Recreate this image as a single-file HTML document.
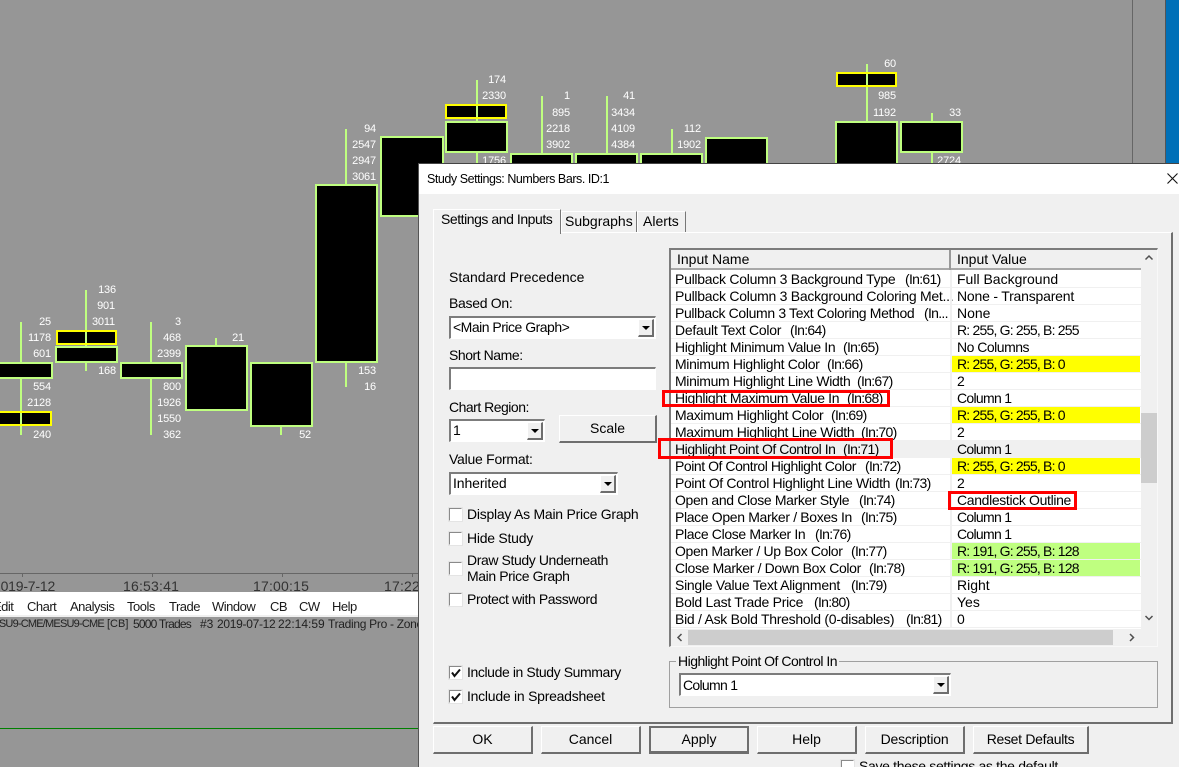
<!DOCTYPE html>
<html><head><meta charset="utf-8"><style>
html,body{margin:0;padding:0;background:#969696}
#p{position:relative;width:1179px;height:767px;overflow:hidden;background:#969696;font-family:"Liberation Sans",sans-serif}
#p div,#p span{position:absolute;box-sizing:border-box;white-space:nowrap}
.c{background:#000;border:2px solid #bfff80}
.y{background:#000;border:2px solid #ff0;height:15px}
.w{background:#bfff80;width:2px}
.n{color:#fff;font-size:11px;line-height:14px;height:14px;text-align:right;width:40px;letter-spacing:-.15px}
.t{font-size:14px;line-height:16px;height:16px;color:#000}
.r{left:671px;width:470px;height:17px;border-bottom:1px solid #f0f0f0;font-size:14px;line-height:16px;color:#000}
.r span{top:0}
.r .a{left:4px;letter-spacing:-.35px}
.r .a.x{letter-spacing:-.45px}
.r .a.z{letter-spacing:-.27px}
.r .i{letter-spacing:-.7px}
.r .v{left:286px}
.r .q{left:286px;letter-spacing:-.8px}
.r .o{left:286px;letter-spacing:-.7px}
.r .b{left:281px;width:188px;height:16px}
.bt{background:#f0f0f0;border:1px solid #fff;border-right:2px solid #6e6e6e;border-bottom:2px solid #6e6e6e;font-size:14px;line-height:24px;text-align:center;color:#000}
.cb{background:#fff;border:2px solid #7c7c7c;border-right:1px solid #fff;border-bottom:1px solid #fff;font-size:14px;line-height:19px;padding-left:2px;color:#000}
.ar{right:1px;top:1px;bottom:1px;width:16px;background:#f0f0f0;border:1px solid #fff;border-right:2px solid #6e6e6e;border-bottom:2px solid #6e6e6e}
.ar:after{content:"";position:absolute;left:3px;top:6px;border:4px solid transparent;border-top:4px solid #000;border-bottom:0}
.k{width:13px;height:13px;background:#fff;border:1px solid #8a8a8a;border-right-color:#fff;border-bottom-color:#fff;outline:1px solid #e4e4e4}
.red{border:3px solid #f00}
.m{font-size:13px;letter-spacing:-.5px;line-height:16px;height:16px;color:#1a1a1a;top:599px}
.s{font-size:12px;line-height:16px;height:16px;color:#222;top:616px}
</style></head><body><div id="p">

<div style="left:1132px;top:0;width:1px;height:163px;background:#666"></div>
<div style="left:1165px;top:0;width:1px;height:163px;background:#555"></div>
<div style="left:1166px;top:0;width:13px;height:163px;background:#0070b8"></div>

<div class="w" style="left:20px;top:322px;height:113px"></div>
<div class="w" style="left:85px;top:290px;height:81px"></div>
<div class="w" style="left:150px;top:322px;height:113px"></div>
<div class="w" style="left:215px;top:338px;height:8px"></div>
<div class="w" style="left:280px;top:424px;height:11px"></div>
<div class="w" style="left:345px;top:129px;height:198px"></div>
<div class="w" style="left:345px;top:360px;height:27px"></div>
<div class="w" style="left:476px;top:80px;height:83px"></div>
<div class="w" style="left:541px;top:96px;height:60px"></div>
<div class="w" style="left:606px;top:96px;height:60px"></div>
<div class="w" style="left:671px;top:129px;height:27px"></div>
<div class="w" style="left:866px;top:64px;height:60px"></div>
<div class="w" style="left:931px;top:113px;height:10px"></div>
<div class="w" style="left:931px;top:150px;height:14px"></div>

<div class="c" style="left:-10px;top:362px;width:63px;height:17px"></div>
<div class="c" style="left:55px;top:346px;width:63px;height:17px"></div>
<div class="c" style="left:120px;top:362px;width:63px;height:17px"></div>
<div class="c" style="left:185px;top:345px;width:63px;height:66px"></div>
<div class="c" style="left:250px;top:362px;width:63px;height:65px"></div>
<div class="c" style="left:315px;top:184px;width:63px;height:179px"></div>
<div class="c" style="left:380px;top:136px;width:64px;height:81px"></div>
<div class="c" style="left:445px;top:121px;width:63px;height:32px"></div>
<div class="c" style="left:510px;top:153px;width:63px;height:40px"></div>
<div class="c" style="left:575px;top:153px;width:63px;height:40px"></div>
<div class="c" style="left:640px;top:153px;width:63px;height:40px"></div>
<div class="c" style="left:705px;top:137px;width:63px;height:50px"></div>
<div class="c" style="left:835px;top:121px;width:63px;height:60px"></div>
<div class="c" style="left:900px;top:121px;width:63px;height:32px"></div>

<div class="y" style="left:-10px;top:411px;width:62px"></div>
<div class="y" style="left:56px;top:330px;width:61px"></div>
<div class="y" style="left:445px;top:104px;width:62px"></div>
<div class="y" style="left:836px;top:72px;width:61px"></div>
<div class="w" style="left:20px;top:413px;height:11px"></div>
<div class="w" style="left:85px;top:332px;height:11px"></div>
<div class="w" style="left:476px;top:106px;height:11px"></div>
<div class="w" style="left:866px;top:74px;height:11px"></div>

<div class="n" style="left:11px;top:315px">25</div><div class="n" style="left:11px;top:331px">1178</div><div class="n" style="left:11px;top:347px">601</div><div class="n" style="left:11px;top:380px">554</div><div class="n" style="left:11px;top:396px">2128</div><div class="n" style="left:11px;top:428px">240</div>
<div class="n" style="left:76px;top:283px">136</div><div class="n" style="left:75px;top:299px">901</div><div class="n" style="left:75px;top:315px">3011</div><div class="n" style="left:76px;top:364px">168</div>
<div class="n" style="left:141px;top:315px">3</div><div class="n" style="left:141px;top:331px">468</div><div class="n" style="left:141px;top:347px">2399</div><div class="n" style="left:141px;top:380px">800</div><div class="n" style="left:141px;top:396px">1926</div><div class="n" style="left:141px;top:412px">1550</div><div class="n" style="left:141px;top:428px">362</div>
<div class="n" style="left:204px;top:331px">21</div>
<div class="n" style="left:271px;top:428px">52</div>
<div class="n" style="left:336px;top:122px">94</div><div class="n" style="left:336px;top:138px">2547</div><div class="n" style="left:336px;top:154px">2947</div><div class="n" style="left:336px;top:170px">3061</div><div class="n" style="left:336px;top:364px">153</div><div class="n" style="left:336px;top:380px">16</div>
<div class="n" style="left:466px;top:73px">174</div><div class="n" style="left:466px;top:89px">2330</div><div class="n" style="left:466px;top:154px">1756</div>
<div class="n" style="left:530px;top:89px">1</div><div class="n" style="left:530px;top:106px">895</div><div class="n" style="left:530px;top:122px">2218</div><div class="n" style="left:530px;top:138px">3902</div>
<div class="n" style="left:595px;top:89px">41</div><div class="n" style="left:595px;top:106px">3434</div><div class="n" style="left:595px;top:122px">4109</div><div class="n" style="left:595px;top:138px">4384</div>
<div class="n" style="left:661px;top:122px">112</div><div class="n" style="left:661px;top:138px">1902</div>
<div class="n" style="left:856px;top:57px">60</div><div class="n" style="left:856px;top:89px">985</div><div class="n" style="left:856px;top:106px">1192</div>
<div class="n" style="left:921px;top:106px">33</div><div class="n" style="left:921px;top:154px">2724</div>

<div style="left:0;top:573px;width:419px;height:1px;background:#666"></div>
<div style="left:22px;top:574px;width:1px;height:3px;background:#666"></div>
<div style="left:152px;top:574px;width:1px;height:3px;background:#666"></div>
<div style="left:282px;top:574px;width:1px;height:3px;background:#666"></div>
<div style="left:412px;top:574px;width:1px;height:3px;background:#666"></div>
<div class="t" style="left:-7px;top:578px;color:#333;letter-spacing:-.2px">2019-7-12</div>
<div class="t" style="left:123px;top:578px;color:#333;letter-spacing:.2px">16:53:41</div>
<div class="t" style="left:253px;top:578px;color:#333;letter-spacing:.2px">17:00:15</div>
<div class="t" style="left:384px;top:578px;color:#333;letter-spacing:.2px">17:22</div>

<div style="left:0;top:592px;width:419px;height:23px;background:#fff"></div>
<div style="left:0;top:615px;width:419px;height:2px;background:#f0f0f0"></div>
<div class="m" style="left:-7px">Edit</div><div class="m" style="left:27px">Chart</div><div class="m" style="left:70px">Analysis</div><div class="m" style="left:127px">Tools</div><div class="m" style="left:169px">Trade</div><div class="m" style="left:212px">Window</div><div class="m" style="left:270px">CB</div><div class="m" style="left:299px">CW</div><div class="m" style="left:332px">Help</div>
<div class="s" style="left:-16px;font-size:11px;letter-spacing:-.8px">MESU9-CME/MESU9-CME</div>
<div class="s" style="left:107px;font-size:11px">[CB]</div>
<div class="s" style="left:133px;letter-spacing:-.8px">5000 Trades</div>
<div class="s" style="left:200px">#3</div>
<div class="s" style="left:217px;letter-spacing:-.3px">2019-07-12</div>
<div class="s" style="left:278px">22:14:59</div>
<div class="s" style="left:328px;letter-spacing:-.3px">Trading Pro - Zones</div>
<div style="left:0;top:728px;width:419px;height:1px;background:#008000"></div>

<!-- dialog -->
<div style="left:418px;top:163px;width:761px;height:604px;background:#f0f0f0;border-left:1px solid #555;border-top:1px solid #444"></div>
<div style="left:419px;top:164px;width:760px;height:30px;background:#fff"></div>
<div class="t" style="left:427px;top:171px;font-size:12.5px;letter-spacing:-.45px">Study Settings: Numbers Bars. ID:1</div>
<svg style="position:absolute;left:1166px;top:172px" width="13" height="13"><path d="M1.5 1.5L11.5 11.5M11.5 1.5L1.5 11.5" stroke="#111" stroke-width="1.1" fill="none"/></svg>

<div style="left:433px;top:232px;width:740px;height:492px;border:1px solid #fff;border-right:2px solid #6e6e6e;border-bottom:2px solid #6e6e6e"></div>
<div style="left:433px;top:209px;width:128px;height:25px;background:#f0f0f0;border:1px solid #fff;border-right:1px solid #777;border-bottom:0"></div>
<div style="left:561px;top:211px;width:76px;height:21px;border:1px solid #fff;border-right:1px solid #777;border-bottom:0"></div>
<div style="left:637px;top:211px;width:49px;height:21px;border:1px solid #fff;border-right:1px solid #777;border-bottom:0"></div>
<div class="t" style="left:441px;top:211px;letter-spacing:-.45px">Settings and Inputs</div>
<div class="t" style="left:565px;top:213px">Subgraphs</div>
<div class="t" style="left:643px;top:213px">Alerts</div>

<div class="t" style="left:449px;top:269px">Standard Precedence</div>
<div class="t" style="left:449px;top:295px;letter-spacing:-.3px">Based On:</div>
<div class="cb" style="left:449px;top:316px;width:207px;height:23px;letter-spacing:-.5px">&lt;Main Price Graph&gt;<div class="ar"></div></div>
<div class="t" style="left:449px;top:347px;letter-spacing:-.45px">Short Name:</div>
<div class="cb" style="left:449px;top:367px;width:207px;height:23px"></div>
<div class="t" style="left:449px;top:399px;letter-spacing:-.5px">Chart Region:</div>
<div class="cb" style="left:449px;top:419px;width:96px;height:23px">1<div class="ar"></div></div>
<div class="bt" style="left:559px;top:415px;width:98px;height:28px">Scale</div>
<div class="t" style="left:449px;top:451px;letter-spacing:-.25px">Value Format:</div>
<div class="cb" style="left:449px;top:472px;width:169px;height:23px;letter-spacing:-.1px">Inherited<div class="ar"></div></div>
<div class="k" style="left:449px;top:508px"></div><div class="t" style="left:467px;top:506px;letter-spacing:-.25px">Display As Main Price Graph</div>
<div class="k" style="left:449px;top:532px"></div><div class="t" style="left:467px;top:530px;letter-spacing:-.25px">Hide Study</div>
<div class="k" style="left:449px;top:562px"></div><div class="t" style="left:467px;top:552px;letter-spacing:-.4px">Draw Study Underneath</div><div class="t" style="left:467px;top:568px;letter-spacing:-.4px">Main Price Graph</div>
<div class="k" style="left:449px;top:593px"></div><div class="t" style="left:467px;top:591px;letter-spacing:-.4px">Protect with Password</div>
<div class="k" style="left:449px;top:666px"></div><svg style="position:absolute;left:451px;top:668px" width="10" height="10"><path d="M1 4.5L3.5 8L9 1.5" stroke="#111" stroke-width="2" fill="none"/></svg><div class="t" style="left:467px;top:664px;letter-spacing:-.4px">Include in Study Summary</div>
<div class="k" style="left:449px;top:690px"></div><svg style="position:absolute;left:451px;top:692px" width="10" height="10"><path d="M1 4.5L3.5 8L9 1.5" stroke="#111" stroke-width="2" fill="none"/></svg><div class="t" style="left:467px;top:688px;letter-spacing:-.25px">Include in Spreadsheet</div>

<!-- list -->
<div style="left:669px;top:248px;width:489px;height:399px;background:#fff;border:2px solid #7c7c7c;border-right:1px solid #f8f8f8;border-bottom:1px solid #f8f8f8"></div>
<div style="left:671px;top:250px;width:470px;height:20px;background:#f0f0f0;border-bottom:2px solid #a8a8a8"></div>
<div style="left:949px;top:250px;width:2px;height:20px;background:#999"></div>
<div class="t" style="left:677px;top:251px">Input Name</div>
<div class="t" style="left:957px;top:251px">Input Value</div>

<div class="r" style="top:271px"><span class="a z">Pullback Column 3 Background Type</span><span class="i" style="left:234px">(In:61)</span><span class="v">Full Background</span></div>
<div class="r" style="top:288px"><span class="a z">Pullback Column 3 Background Coloring Met...</span><span class="v" style="letter-spacing:-.2px">None - Transparent</span></div>
<div class="r" style="top:305px"><span class="a">Pullback Column 3 Text Coloring Method</span><span class="i" style="left:253px">(In...</span><span class="v">None</span></div>
<div class="r" style="top:322px"><span class="a z">Default Text Color</span><span class="i" style="left:119px">(In:64)</span><span class="q">R: 255, G: 255, B: 255</span></div>
<div class="r" style="top:339px"><span class="a">Highlight Minimum Value In</span><span class="i" style="left:172px">(In:65)</span><span class="v" style="letter-spacing:-.5px">No Columns</span></div>
<div class="r" style="top:356px"><span class="a">Minimum Highlight Color</span><span class="i" style="left:156px">(In:66)</span><span class="b" style="background:#ff0"></span><span class="q">R: 255, G: 255, B: 0</span></div>
<div class="r" style="top:373px"><span class="a">Minimum Highlight Line Width</span><span class="i" style="left:186px">(In:67)</span><span class="v">2</span></div>
<div class="r" style="top:390px"><span class="a">Highlight Maximum Value In</span><span class="i" style="left:176px">(In:68)</span><span class="o">Column 1</span></div>
<div class="r" style="top:407px"><span class="a">Maximum Highlight Color</span><span class="i" style="left:160px">(In:69)</span><span class="b" style="background:#ff0"></span><span class="q">R: 255, G: 255, B: 0</span></div>
<div class="r" style="top:424px"><span class="a">Maximum Highlight Line Width</span><span class="i" style="left:190px">(In:70)</span><span class="v">2</span></div>
<div class="r" style="top:441px;background:#f0f0f0"><span class="a x">Highlight Point Of Control In</span><span class="i" style="left:172px">(In:71)</span><span class="o">Column 1</span></div>
<div class="r" style="top:458px"><span class="a x">Point Of Control Highlight Color</span><span class="i" style="left:194px">(In:72)</span><span class="b" style="background:#ff0"></span><span class="q">R: 255, G: 255, B: 0</span></div>
<div class="r" style="top:475px"><span class="a">Point Of Control Highlight Line Width</span><span class="i" style="left:224px">(In:73)</span><span class="v">2</span></div>
<div class="r" style="top:492px"><span class="a">Open and Close Marker Style</span><span class="i" style="left:188px">(In:74)</span><span class="v" style="letter-spacing:-.35px">Candlestick Outline</span></div>
<div class="r" style="top:509px"><span class="a">Place Open Marker / Boxes In</span><span class="i" style="left:190px">(In:75)</span><span class="o">Column 1</span></div>
<div class="r" style="top:526px"><span class="a">Place Close Marker In</span><span class="i" style="left:144px">(In:76)</span><span class="o">Column 1</span></div>
<div class="r" style="top:543px"><span class="a">Open Marker / Up Box Color</span><span class="i" style="left:180px">(In:77)</span><span class="b" style="background:#bfff80"></span><span class="q">R: 191, G: 255, B: 128</span></div>
<div class="r" style="top:560px"><span class="a">Close Marker / Down Box Color</span><span class="i" style="left:198px">(In:78)</span><span class="b" style="background:#bfff80"></span><span class="q">R: 191, G: 255, B: 128</span></div>
<div class="r" style="top:577px"><span class="a z">Single Value Text Alignment</span><span class="i" style="left:180px">(In:79)</span><span class="v">Right</span></div>
<div class="r" style="top:594px"><span class="a z">Bold Last Trade Price</span><span class="i" style="left:143px">(In:80)</span><span class="v">Yes</span></div>
<div class="r" style="top:611px"><span class="a z">Bid / Ask Bold Threshold (0-disables)</span><span class="i" style="left:235px">(In:81)</span><span class="v">0</span></div>
<div style="left:950px;top:270px;width:2px;height:358px;background:#f0f0f0"></div>

<div style="left:1141px;top:250px;width:16px;height:379px;background:#f0f0f0"></div>
<div style="left:1141px;top:413px;width:16px;height:70px;background:#cdcdcd"></div>
<svg style="position:absolute;left:1141px;top:250px" width="16" height="379"><path d="M4.5 9.5L8 6L11.5 9.5M4.5 366L8 369.500L11.500 366" stroke="#505050" stroke-width="1.500" fill="none"/></svg>
<div style="left:671px;top:629px;width:486px;height:17px;background:#f0f0f0"></div>
<div style="left:688px;top:630px;width:425px;height:15px;background:#cdcdcd"></div>
<svg style="position:absolute;left:671px;top:630px" width="470" height="15"><path d="M10.500 4L7 7.500L10.500 11M459 4L462.500 7.500L459 11" stroke="#505050" stroke-width="1.500" fill="none"/></svg>

<div style="left:662px;top:390px;width:228px;height:17px" class="red"></div>
<div style="left:658px;top:438px;width:235px;height:21px" class="red"></div>
<div style="left:948px;top:491px;width:129px;height:19px" class="red"></div>

<div style="left:669px;top:661px;width:489px;height:47px;border:1px solid #a0a0a0"></div>
<div class="t" style="left:676px;top:653px;background:#f0f0f0;padding:0 2px;letter-spacing:-.5px">Highlight Point Of Control In</div>
<div class="cb" style="left:679px;top:673px;width:272px;height:23px;letter-spacing:-.7px;line-height:21px">Column 1<div class="ar"></div></div>

<div class="bt" style="left:433px;top:726px;width:100px;height:28px">OK</div>
<div class="bt" style="left:541px;top:726px;width:100px;height:28px">Cancel</div>
<div class="bt" style="left:649px;top:726px;width:100px;height:28px;border:2px solid #6e6e6e;border-bottom-width:3px;line-height:23px">Apply</div>
<div class="bt" style="left:757px;top:726px;width:100px;height:28px">Help</div>
<div class="bt" style="left:865px;top:726px;width:100px;height:28px;letter-spacing:-.2px">Description</div>
<div class="bt" style="left:973px;top:726px;width:116px;height:28px;letter-spacing:-.3px">Reset Defaults</div>
<div class="k" style="left:841px;top:760px"></div>
<div class="t" style="left:859px;top:758px;letter-spacing:-.33px">Save these settings as the default</div>
</div></body></html>
